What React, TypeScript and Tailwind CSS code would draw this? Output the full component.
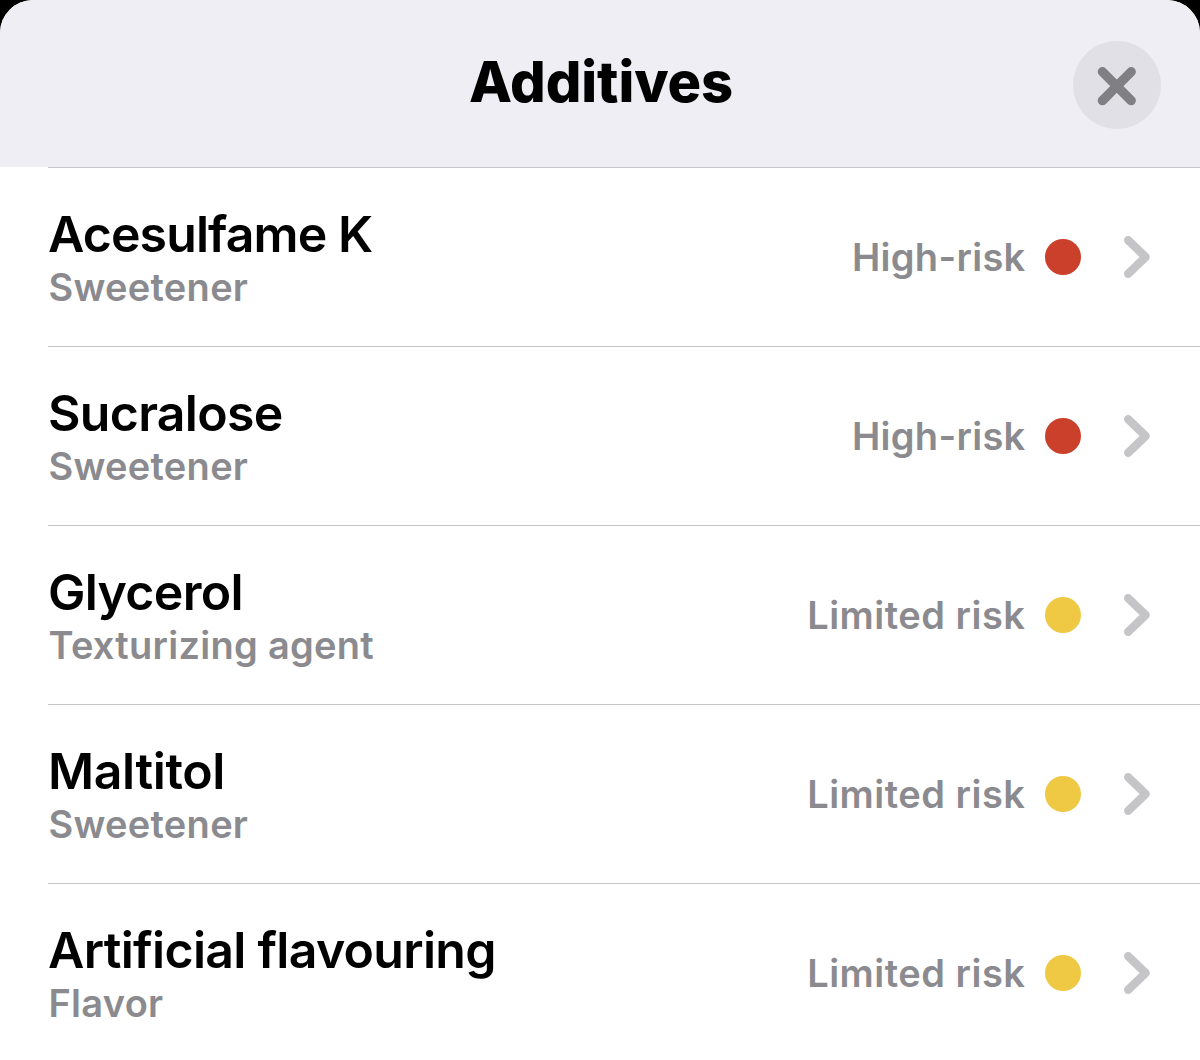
const items = [
  { name: "Acesulfame K", kind: "Sweetener", risk: "High-risk", dot: "bg-[#cb402b]", tracking: "tracking-[-0.9px]", riskTracking: "tracking-[0.3px]" },
  { name: "Sucralose", kind: "Sweetener", risk: "High-risk", dot: "bg-[#cb402b]", tracking: "tracking-[-0.7px]", riskTracking: "tracking-[0.3px]" },
  { name: "Glycerol", kind: "Texturizing agent", risk: "Limited risk", dot: "bg-[#efc844]", tracking: "tracking-[-0.7px]", riskTracking: "tracking-[0.5px]" },
  { name: "Maltitol", kind: "Sweetener", risk: "Limited risk", dot: "bg-[#efc844]", tracking: "tracking-[-0.4px]", riskTracking: "tracking-[0.5px]" },
  { name: "Artificial flavouring", kind: "Flavor", risk: "Limited risk", dot: "bg-[#efc844]", tracking: "tracking-[-0.7px]", riskTracking: "tracking-[0.5px]" },
];

export default function App() {
  return (
    <div className="h-[1060px] w-[1200px] overflow-hidden bg-black font-['Inter',sans-serif]">
      <div className="h-full overflow-hidden rounded-t-[33px] bg-white">
        <header className="grid h-[167px] grid-cols-[1fr_auto_1fr] bg-[#efeef5] px-[39px]">
          <span />
          <h1 className="ml-0.5 mt-[47px] text-[56px] font-extrabold leading-[70px] tracking-[-0.1px] text-black">Additives</h1>
          <button aria-label="Close" className="mt-[41px] flex size-[88px] items-center justify-center justify-self-end rounded-full bg-[#e1e0e6]">
            <svg width="44" height="44" viewBox="0 0 44 44" fill="none" stroke="#7f7f84" strokeWidth="9.4" strokeLinecap="round">
              <path d="M7.4 8.8 36.2 37.6M36.2 8.8 7.4 37.6" />
            </svg>
          </button>
        </header>
        <ul className="pl-12">
          {items.map((item) => (
            <li key={item.name} className="flex h-[179px] items-start justify-between border-t border-[#c6c5ca] pr-[48px]">
              <div className="pt-[35px]">
                <div className={`whitespace-nowrap text-[50px] font-semibold leading-[62px] text-black ${item.tracking}`}>{item.name}</div>
                <div className="whitespace-nowrap pl-[0.5px] text-[38px] font-semibold leading-[44px] tracking-[0.27px] text-[#8a8a8f]">{item.kind}</div>
              </div>
              <div className="mt-[64px] flex h-[50px] items-center">
                <span className={`whitespace-nowrap text-[38px] font-semibold leading-[50px] text-[#8a8a8f] ${item.riskTracking}`}>{item.risk}</span>
                <span className={`ml-[19.5px] size-9 rounded-full ${item.dot}`} />
                <svg className="ml-[41px]" width="30" height="44" viewBox="0 0 30 44" fill="none" stroke="#c5c5c8" strokeWidth="8.4" strokeLinecap="round" strokeLinejoin="round">
                  <path d="M6.2 5.2 23.6 22 6.2 38.8" />
                </svg>
              </div>
            </li>
          ))}
        </ul>
      </div>
    </div>
  );
}
